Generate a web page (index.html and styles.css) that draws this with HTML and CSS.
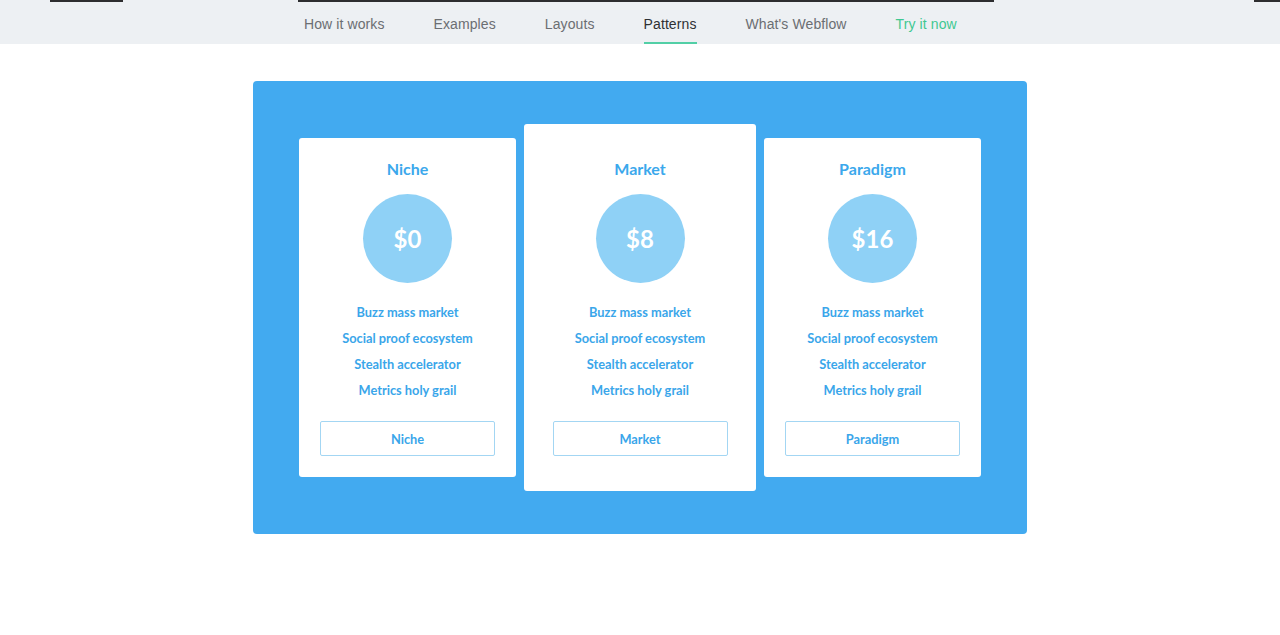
FILE: index.html
```html
<!DOCTYPE html>
<html lang="en">
<head>
<meta charset="utf-8">
<title>Patterns – Pricing</title>
<link rel="stylesheet" href="styles.css">
</head>
<body>
<header class="topnav">
  <div class="strip">
    <span class="bar bar-a"></span>
    <span class="bar bar-b"></span>
    <span class="bar bar-c"></span>
  </div>
  <nav class="links">
    <a class="link">How it works</a>
    <a class="link">Examples</a>
    <a class="link">Layouts</a>
    <a class="link active">Patterns</a>
    <a class="link">What's Webflow</a>
    <a class="link try">Try it now</a>
  </nav>
</header>

<main class="stage">
  <section class="pricing">
    <div class="card">
      <h3 class="title">Niche</h3>
      <div class="price">$0</div>
      <ul class="features">
        <li>Buzz mass market</li>
        <li>Social proof ecosystem</li>
        <li>Stealth accelerator</li>
        <li>Metrics holy grail</li>
      </ul>
      <a class="btn">Niche</a>
    </div>
    <div class="card featured">
      <h3 class="title">Market</h3>
      <div class="price">$8</div>
      <ul class="features">
        <li>Buzz mass market</li>
        <li>Social proof ecosystem</li>
        <li>Stealth accelerator</li>
        <li>Metrics holy grail</li>
      </ul>
      <a class="btn">Market</a>
    </div>
    <div class="card">
      <h3 class="title">Paradigm</h3>
      <div class="price">$16</div>
      <ul class="features">
        <li>Buzz mass market</li>
        <li>Social proof ecosystem</li>
        <li>Stealth accelerator</li>
        <li>Metrics holy grail</li>
      </ul>
      <a class="btn">Paradigm</a>
    </div>
  </section>
</main>
</body>
</html>
```

FILE: styles.css
```css
* { box-sizing: border-box; }

html, body {
  margin: 0;
  padding: 0;
  background: #ffffff;
}

body {
  font-family: "Lato", "Open Sans", sans-serif;
  width: 1280px;
  height: 635px;
  overflow: hidden;
}

.topnav {
  height: 44px;
  background: #edf0f3;
  display: flex;
  flex-direction: column;
}

.strip {
  height: 2px;
  display: flex;
}

.bar {
  display: block;
  height: 2px;
  background: #2d2d2f;
}

.bar-a { margin-left: 50px; width: 73px; }
.bar-b { margin-left: 175px; width: 696px; }
.bar-c { margin-left: 260px; width: 26px; }

.links {
  flex: 1;
  display: flex;
  align-items: stretch;
  gap: 49px;
  padding-left: 304px;
}

.link {
  font-family: "Liberation Sans", "Roboto", sans-serif;
  font-size: 14px;
  letter-spacing: 0.1px;
  color: #6b6e72;
  display: flex;
  align-items: center;
  padding-top: 3px;
  border-bottom: 2px solid transparent;
}

.link.active {
  color: #2e3033;
  border-bottom-color: #52cfa6;
}

.link.try {
  color: #3fc891;
}

.stage {
  padding-top: 37px;
  display: flex;
  justify-content: center;
}

.pricing {
  width: 774px;
  height: 453px;
  background: #42aaf0;
  border-radius: 4px;
  display: flex;
  align-items: center;
  justify-content: center;
  gap: 8px;
}

.card {
  width: 217px;
  background: #ffffff;
  border-radius: 3px;
  padding: 21px 0 21px;
  display: flex;
  flex-direction: column;
  align-items: center;
}

.card.featured {
  width: 232px;
  padding: 35px 0 35px;
}

.title {
  margin: 0;
  font-size: 16px;
  line-height: 20px;
  font-weight: 700;
  color: #3ba8ec;
}

.price {
  margin-top: 15px;
  width: 89px;
  height: 89px;
  border-radius: 50%;
  background: #8fd1f6;
  color: #ffffff;
  font-size: 24px;
  font-weight: 700;
  display: flex;
  align-items: center;
  justify-content: center;
}

.features {
  list-style: none;
  margin: 16px 0 0;
  padding: 0;
  text-align: center;
}

.features li {
  font-size: 12.8px;
  line-height: 26px;
  font-weight: 700;
  color: #3aa6ea;
}

.btn {
  margin-top: 18px;
  width: 175px;
  height: 35px;
  border: 1px solid #a3d6f3;
  border-radius: 2px;
  display: flex;
  align-items: center;
  justify-content: center;
  font-size: 12.8px;
  font-weight: 700;
  color: #3aa6ea;
}
```
